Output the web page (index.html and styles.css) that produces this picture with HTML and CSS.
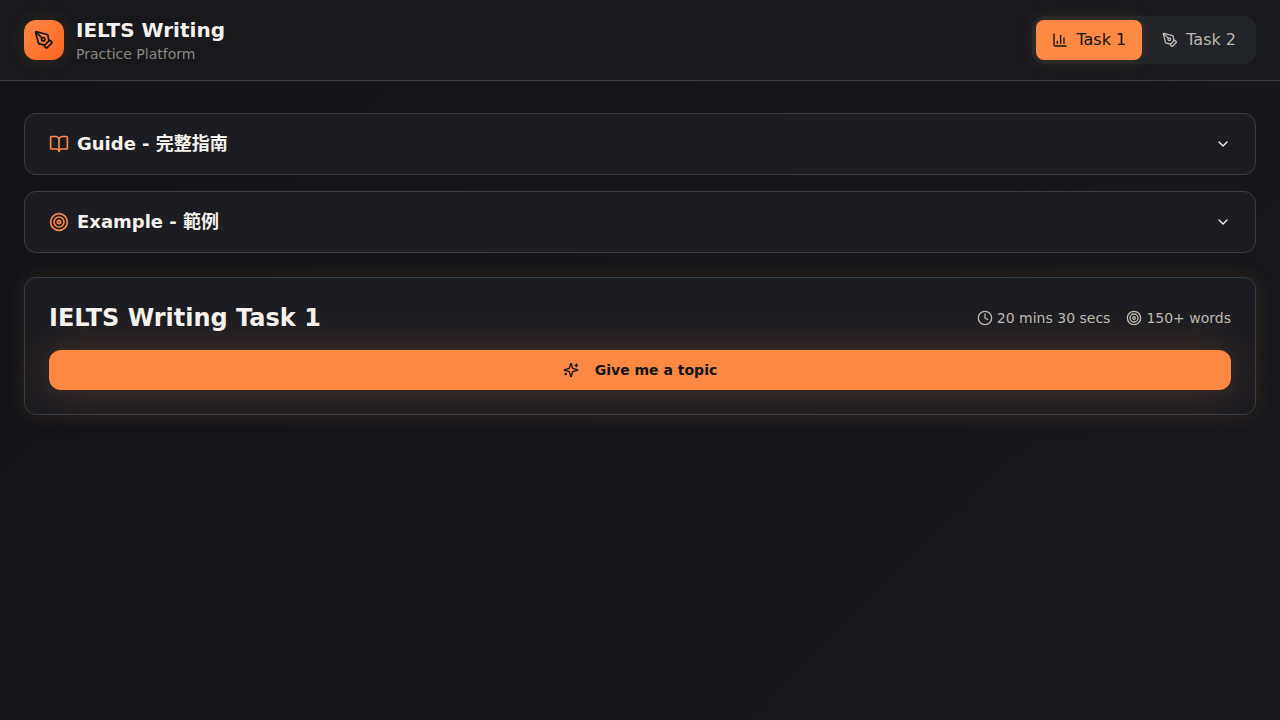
FILE: index.html
```html
<!DOCTYPE html>
<html lang="en">
<head>
  <meta charset="UTF-8">
  <meta name="viewport" content="width=device-width, initial-scale=1.0">
  <title>IELTS Writing</title>
  <link rel="stylesheet" href="styles.css">
</head>
<body>

<header class="header">
  <div class="brand">
    <div class="logo">
      <svg class="icon icon-md" viewBox="0 0 24 24" aria-hidden="true">
        <path d="M15.707 21.293a1 1 0 0 1-1.414 0l-1.586-1.586a1 1 0 0 1 0-1.414l5.586-5.586a1 1 0 0 1 1.414 0l1.586 1.586a1 1 0 0 1 0 1.414z"/>
        <path d="m18 13-1.375-6.874a1 1 0 0 0-.746-.776L3.235 2.028a1 1 0 0 0-1.207 1.207L5.35 15.879a1 1 0 0 0 .776.746L13 18"/>
        <path d="m2.3 2.3 7.286 7.286"/>
        <circle cx="11" cy="11" r="2"/>
      </svg>
    </div>
    <div>
      <h1 class="brand-name">IELTS Writing</h1>
      <p class="brand-sub">Practice Platform</p>
    </div>
  </div>

  <nav class="tabs">
    <button type="button" class="tab active">
      <svg class="icon" viewBox="0 0 24 24" aria-hidden="true">
        <path d="M3 3v16a2 2 0 0 0 2 2h16"/>
        <path d="M18 17V9"/>
        <path d="M13 17V5"/>
        <path d="M8 17v-3"/>
      </svg>
      Task 1
    </button>
    <button type="button" class="tab">
      <svg class="icon" viewBox="0 0 24 24" aria-hidden="true">
        <path d="M15.707 21.293a1 1 0 0 1-1.414 0l-1.586-1.586a1 1 0 0 1 0-1.414l5.586-5.586a1 1 0 0 1 1.414 0l1.586 1.586a1 1 0 0 1 0 1.414z"/>
        <path d="m18 13-1.375-6.874a1 1 0 0 0-.746-.776L3.235 2.028a1 1 0 0 0-1.207 1.207L5.35 15.879a1 1 0 0 0 .776.746L13 18"/>
        <path d="m2.3 2.3 7.286 7.286"/>
        <circle cx="11" cy="11" r="2"/>
      </svg>
      Task 2
    </button>
  </nav>
</header>

<main class="main">
  <div class="panels">
    <button type="button" class="panel">
      <svg class="icon icon-md accent" viewBox="0 0 24 24" aria-hidden="true">
        <path d="M12 7v14"/>
        <path d="M3 18a1 1 0 0 1-1-1V4a1 1 0 0 1 1-1h5a4 4 0 0 1 4 4 4 4 0 0 1 4-4h5a1 1 0 0 1 1 1v13a1 1 0 0 1-1 1h-6a3 3 0 0 0-3 3 3 3 0 0 0-3-3z"/>
      </svg>
      <span class="panel-title">Guide - 完整指南</span>
      <svg class="icon" viewBox="0 0 24 24" aria-hidden="true"><path d="m6 9 6 6 6-6"/></svg>
    </button>

    <button type="button" class="panel">
      <svg class="icon icon-md accent" viewBox="0 0 24 24" aria-hidden="true">
        <circle cx="12" cy="12" r="10"/>
        <circle cx="12" cy="12" r="6"/>
        <circle cx="12" cy="12" r="2"/>
      </svg>
      <span class="panel-title">Example - 範例</span>
      <svg class="icon" viewBox="0 0 24 24" aria-hidden="true"><path d="m6 9 6 6 6-6"/></svg>
    </button>
  </div>

  <section class="task-card">
    <div class="task-header">
      <h2 class="task-title">IELTS Writing Task 1</h2>
      <div class="task-meta">
        <span class="meta-item">
          <svg class="icon" viewBox="0 0 24 24" aria-hidden="true">
            <circle cx="12" cy="12" r="10"/>
            <path d="M12 6v6l4 2"/>
          </svg>
          20 mins 30 secs
        </span>
        <span class="meta-item">
          <svg class="icon" viewBox="0 0 24 24" aria-hidden="true">
            <circle cx="12" cy="12" r="10"/>
            <circle cx="12" cy="12" r="6"/>
            <circle cx="12" cy="12" r="2"/>
          </svg>
          150+ words
        </span>
      </div>
    </div>

    <button type="button" class="topic-btn">
      <svg class="icon" viewBox="0 0 24 24" aria-hidden="true">
        <path d="M9.937 15.5A2 2 0 0 0 8.5 14.063l-6.135-1.582a.5.5 0 0 1 0-.962L8.5 9.936A2 2 0 0 0 9.937 8.5l1.582-6.135a.5.5 0 0 1 .963 0L14.063 8.5A2 2 0 0 0 15.5 9.937l6.135 1.581a.5.5 0 0 1 0 .964L15.5 14.063a2 2 0 0 0-1.437 1.437l-1.582 6.135a.5.5 0 0 1-.963 0z"/>
        <path d="M20 3v4"/>
        <path d="M22 5h-4"/>
        <path d="M4 17v2"/>
        <path d="M5 18H3"/>
      </svg>
      Give me a topic
    </button>
  </section>
</main>

</body>
</html>
```
FILE: styles.css
```css
* {
  box-sizing: border-box;
}

body {
  margin: 0;
  min-height: 100vh;
  font-family: "DejaVu Sans", "Noto Sans CJK SC", sans-serif;
  font-size: 16px;
  line-height: 24px;
  color: #f5f1ed;
  background: linear-gradient(135deg, #111317, #17181c);
}

h1, h2, p {
  margin: 0;
}

button {
  font: inherit;
  color: inherit;
  border: none;
  cursor: pointer;
}

.icon {
  width: 16px;
  height: 16px;
  flex-shrink: 0;
  fill: none;
  stroke: currentColor;
  stroke-width: 2;
  stroke-linecap: round;
  stroke-linejoin: round;
}

.icon-md {
  width: 20px;
  height: 20px;
}

.accent {
  color: #ff8843;
}

/* Header */
.header {
  display: flex;
  justify-content: space-between;
  align-items: center;
  padding: 16px 24px;
  background-color: #18191d;
  border-bottom: 1px solid #3b3d44;
}

.brand {
  display: flex;
  align-items: center;
  gap: 12px;
}

.logo {
  width: 40px;
  height: 40px;
  display: flex;
  align-items: center;
  justify-content: center;
  border-radius: 12px;
  color: #121417;
  background: linear-gradient(135deg, #ff8843, #ff6524);
  box-shadow: 0 0 20px rgba(255, 136, 67, 0.1);
}

.brand-name {
  font-size: 20px;
  line-height: 28px;
  font-weight: bold;
}

.brand-sub {
  font-size: 14px;
  line-height: 20px;
  color: #8c857d;
}

.tabs {
  display: flex;
  gap: 4px;
  padding: 4px;
  border-radius: 12px;
  background-color: #212429;
}

.tab {
  display: flex;
  align-items: center;
  gap: 8px;
  padding: 8px 16px;
  border-radius: 8px;
  color: #bfb8b0;
  background: none;
}

.tab.active {
  color: #121417;
  background-color: #ff8843;
  box-shadow: 0 0 20px rgba(255, 136, 67, 0.12);
}

/* Content */
.main {
  padding: 32px 24px;
}

.panels {
  display: flex;
  flex-direction: column;
  gap: 16px;
  margin-bottom: 24px;
}

.panel {
  display: flex;
  align-items: center;
  gap: 8px;
  padding: 16px 24px;
  border: 1px solid #3b3d44;
  border-radius: 12px;
  background-color: #1c1d22;
  text-align: left;
}

.panel-title {
  flex: 1;
  font-size: 18px;
  line-height: 28px;
  font-weight: bold;
}

.task-card {
  padding: 24px;
  border: 1px solid #3b3d44;
  border-radius: 12px;
  background-color: #1c1d22;
  box-shadow: 0 0 20px rgba(255, 136, 67, 0.12);
}

.task-header {
  display: flex;
  justify-content: space-between;
  align-items: center;
  margin-bottom: 16px;
}

.task-title {
  font-size: 24px;
  line-height: 32px;
  font-weight: bold;
}

.task-meta {
  display: flex;
  gap: 16px;
  font-size: 14px;
  line-height: 20px;
  color: #bfb8b0;
}

.meta-item {
  display: flex;
  align-items: center;
  gap: 4px;
}

.topic-btn {
  display: flex;
  align-items: center;
  justify-content: center;
  gap: 16px;
  width: 100%;
  height: 40px;
  border-radius: 12px;
  font-size: 14px;
  font-weight: bold;
  color: #121417;
  background-color: #ff8843;
  box-shadow: 0 0 40px rgba(255, 136, 67, 0.22);
}
```
